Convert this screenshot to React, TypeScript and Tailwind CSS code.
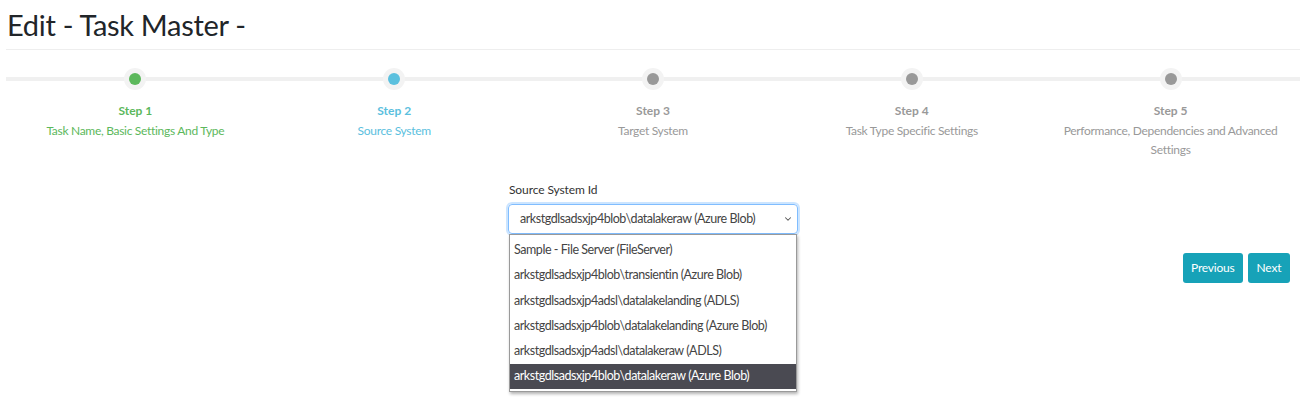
import { ChevronDown } from 'lucide-react';

const steps = [
  { title: 'Step 1', desc: 'Task Name, Basic Settings And Type', state: 'done' },
  { title: 'Step 2', desc: 'Source System', state: 'active' },
  { title: 'Step 3', desc: 'Target System', state: 'todo' },
  { title: 'Step 4', desc: 'Task Type Specific Settings', state: 'todo' },
  { title: 'Step 5', desc: 'Performance, Dependencies and Advanced Settings', state: 'todo' },
];

const options = [
  'Sample - File Server (FileServer)',
  'arkstgdlsadsxjp4blob\\transientin (Azure Blob)',
  'arkstgdlsadsxjp4adsl\\datalakelanding (ADLS)',
  'arkstgdlsadsxjp4blob\\datalakelanding (Azure Blob)',
  'arkstgdlsadsxjp4adsl\\datalakeraw (ADLS)',
  'arkstgdlsadsxjp4blob\\datalakeraw (Azure Blob)',
];

const App = () => {
  return (
    <div className="w-[1300px] h-[400px] overflow-hidden bg-white font-['Lato',sans-serif] text-[#212529]">
      <h1 className="pl-[7px] pt-[7px] text-[29px] leading-[36px] tracking-[-0.3px]">Edit - Task Master -</h1>
      <div className="ml-[6px] mt-[6px] h-px bg-[#eeeeee]" />

      <div className="ml-[6px] mt-[17px] flex">
        {steps.map((s) => {
          const dot =
            s.state === 'done' ? 'bg-[#5cb85c]' : s.state === 'active' ? 'bg-[#5bc0de]' : 'bg-[#999999]';
          const text =
            s.state === 'done' ? 'text-[#5cb85c]' : s.state === 'active' ? 'text-[#5bc0de]' : 'text-[#999999]';
          return (
            <div key={s.title} className="w-[259px] flex flex-col items-center">
              <div className="relative w-full h-[24px] flex items-center justify-center">
                <div className="absolute left-0 right-0 top-[10px] h-[4px] bg-[#f0f0f0]" />
                <div className="relative w-[22px] h-[22px] rounded-full bg-[#f3f3f3] flex items-center justify-center">
                  <div className={`w-[12px] h-[12px] rounded-full ${dot}`} />
                </div>
              </div>
              <div className={`mt-[10px] text-[12px] font-bold leading-[20px] ${text}`}>{s.title}</div>
              <div className={`px-[22px] text-center text-[12px] leading-[19px] tracking-[-0.3px] ${text}`}>
                {s.desc}
              </div>
            </div>
          );
        })}
      </div>

      <div className="relative mt-[23px] h-[220px]">
        <div className="absolute left-[508px] top-0 w-[290px]">
          <div className="pl-[1px] text-[12px] leading-[16px] tracking-[-0.1px] text-[#333]">Source System Id</div>
          <div className="mt-[6px] h-[30px] rounded-[4px] border border-[#80bdff] shadow-[0_0_0_2px_rgba(0,123,255,0.2)] flex items-center justify-between pl-[11px] pr-[4px] text-[12.5px] tracking-[-0.45px] text-[#444]">
            <span>arkstgdlsadsxjp4blob\datalakeraw (Azure Blob)</span>
            <ChevronDown className="w-[10px] h-[10px] text-[#555]" strokeWidth={2.5} />
          </div>
          <div className="ml-[1px] w-[288px] pt-[3px] pb-[2px] border border-[#9a9a9a] bg-white shadow-[1px_2px_3px_rgba(0,0,0,0.3)]">
            {options.map((o, i) => (
              <div
                key={o}
                className={`h-[25.2px] flex items-center pl-[4px] text-[12.5px] tracking-[-0.45px] ${
                  i === options.length - 1 ? 'bg-[#4a4a52] text-white' : 'text-[#444]'
                }`}
              >
                {o}
              </div>
            ))}
          </div>
        </div>

        <div className="absolute left-[1183px] top-[71px] flex gap-[5px]">
          <button className="h-[30px] px-[8px] rounded-[3px] bg-[#17a2b8] text-white text-[12px] tracking-[-0.2px]">
            Previous
          </button>
          <button className="h-[30px] px-[9px] rounded-[3px] bg-[#17a2b8] text-white text-[12px] tracking-[-0.2px]">
            Next
          </button>
        </div>
      </div>
    </div>
  );
};

export default App;
